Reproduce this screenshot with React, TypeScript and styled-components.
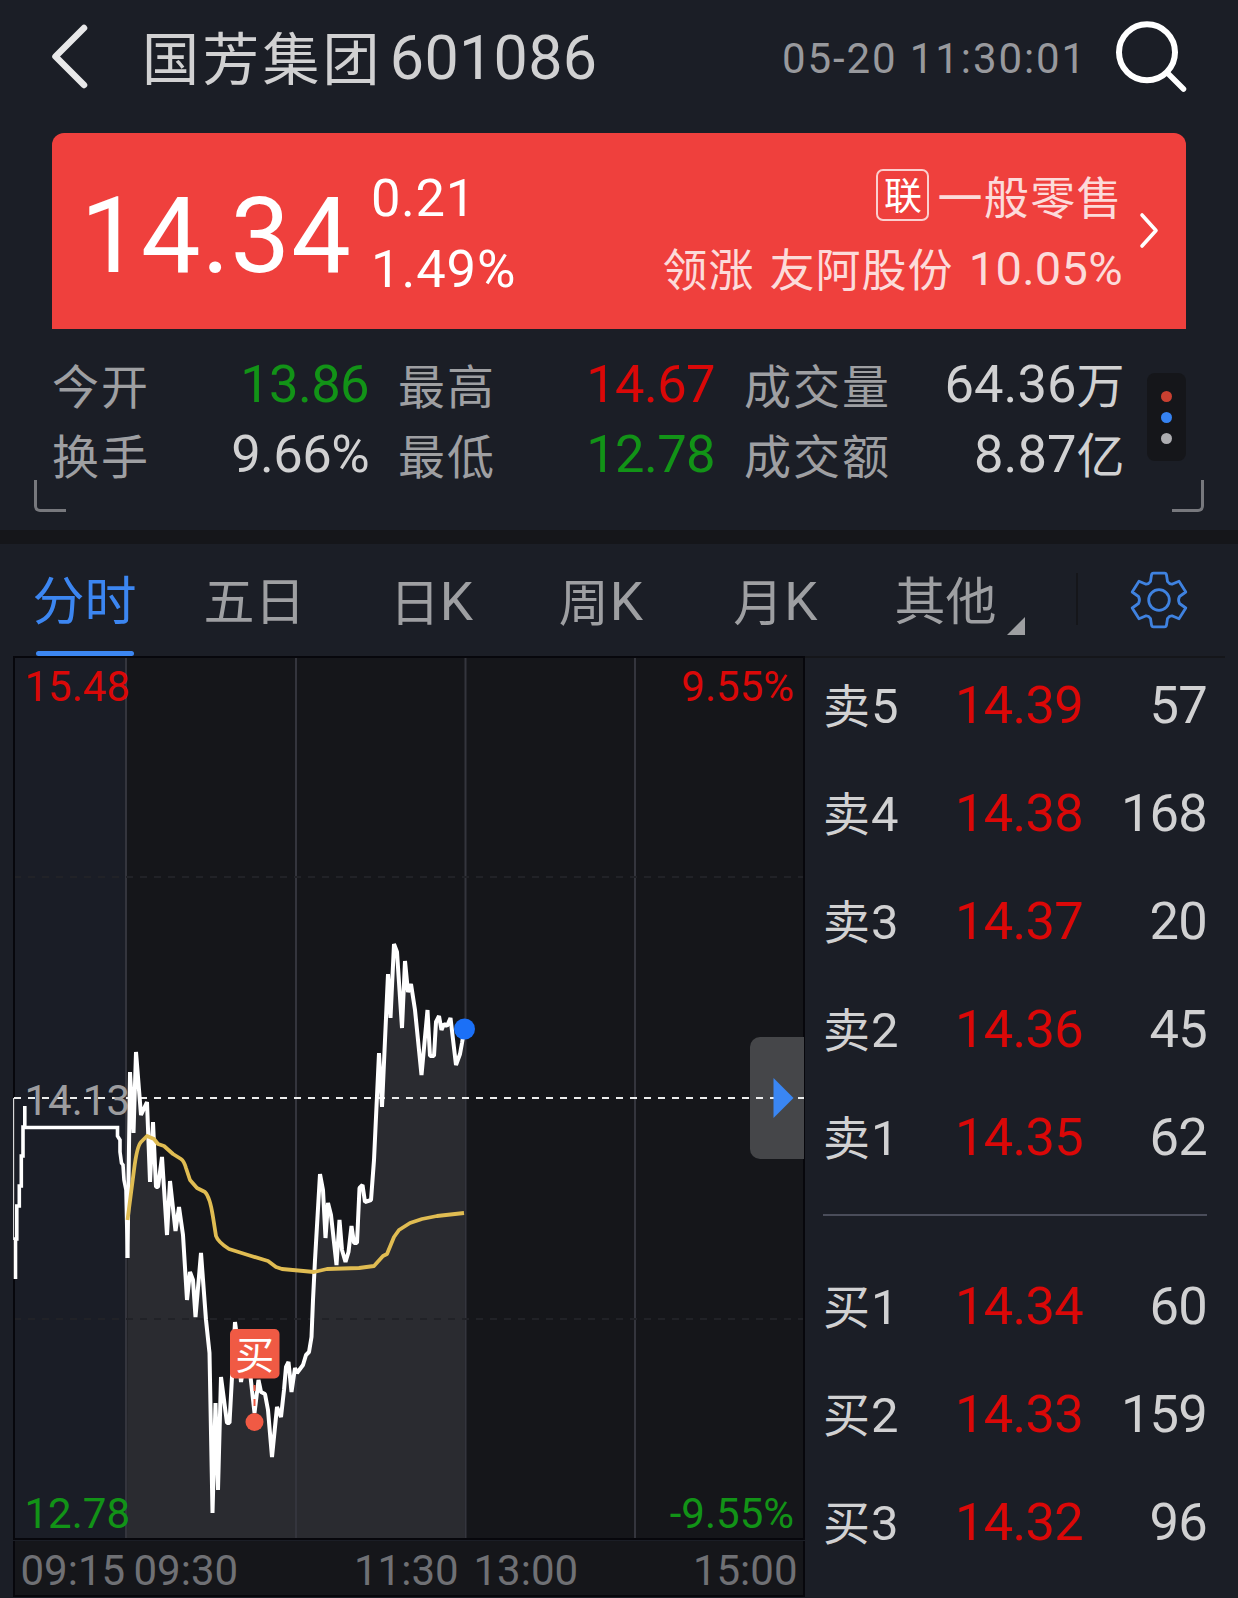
import React from "react";
import styled, { createGlobalStyle } from "styled-components";

const colors = {
  page: "#1b1e26",
  deep: "#15161a",
  border: "#07070c",
  grid: "#34353d",
  red: "#da0808",
  green: "#129317",
  light: "#d1d1d2",
  muted: "#9e9fa2",
  blue: "#3c86f1",
  card: "#ef403d",
};

const GlobalStyle = createGlobalStyle`
  * { box-sizing: border-box; }
  html, body { margin: 0; padding: 0; background: ${colors.page}; }
  body { font-family: Roboto, "Noto Sans CJK SC", sans-serif; font-weight: 400; }
  svg { display: block; flex: none; }
`;

const Screen = styled.main`
  width: 1238px;
  height: 1598px;
  overflow: hidden;
  background: ${colors.page};
  display: flex;
  flex-direction: column;
`;

const Text = styled.span<{ $size: number; $color?: string; $spacing?: number; $drop?: number }>`
  display: inline-block;
  font-size: ${(p) => p.$size}px;
  color: ${(p) => p.$color ?? "inherit"};
  letter-spacing: ${(p) => p.$spacing ?? 0}px;
  word-spacing: 3px;
  transform: translateY(${(p) => p.$drop ?? 0}px);
  white-space: pre;
`;

/* Header */
const Header = styled.header`
  height: 117px;
  margin-bottom: 16px;
  padding: 0 48px 0 48px;
  display: flex;
  align-items: center;
  flex: none;
`;

const Title = styled.h1`
  margin: 0 0 0 50px;
  font-size: 61px;
  font-weight: 400;
  line-height: 117px;
  color: ${colors.light};
  display: flex;
  align-items: baseline;
  gap: 7px;
`;

const Clock = styled.time`
  margin-left: auto;
  margin-right: 25px;
  font-size: 42px;
  line-height: 117px;
  letter-spacing: 1.9px;
  color: #98999d;
`;

/* Quote card */
const Card = styled.section`
  height: 196px;
  flex: none;
  margin: 0 52px;
  padding-left: 28.5px;
  border-radius: 12px 12px 0 0;
  background: ${colors.card};
  color: #fff;
  display: flex;
`;

const Price = styled.div`
  width: 290.5px;
  font-size: 106px;
  line-height: 206px;
  letter-spacing: 1px;
`;

const Lines = styled.div<{ $end?: boolean }>`
  padding-top: 30px;
  display: flex;
  flex-direction: column;
  align-items: ${(p) => (p.$end ? "flex-end" : "flex-start")};
  ${(p) => p.$end && "margin-left: auto; color: rgba(255,255,255,0.82);"}
`;

const Line = styled.div`
  height: 70.5px;
  line-height: 70.5px;
  display: flex;
  align-items: baseline;
`;

const Tag = styled.span`
  width: 53px;
  height: 52px;
  align-self: flex-start;
  border: 2px solid rgba(255, 255, 255, 0.75);
  border-radius: 7px;
  margin: 6px 8px 0 0;
  color: #fff;
  font-size: 38px;
  line-height: 50px;
  text-align: center;
`;

const CardArrow = styled.div`
  width: 63px;
  padding: 78px 0 0 14.5px;
`;

/* Stats */
const Stats = styled.section`
  height: 201px;
  flex: none;
  padding: 20px 52px 0 52px;
  display: flex;
  position: relative;
`;

const StatColumn = styled.div<{ $width: number; $gap: number }>`
  width: ${(p) => p.$width}px;
  margin-right: ${(p) => p.$gap}px;
`;

const Stat = styled.div`
  height: 70px;
  line-height: 70px;
  font-size: 52.5px;
  display: flex;
  justify-content: space-between;
  align-items: baseline;
`;

const MoreButton = styled.button`
  width: 39px;
  height: 88px;
  margin: 24px 0 0 0;
  padding: 0;
  border: 0;
  border-radius: 8px;
  background: ${colors.deep};
  display: flex;
  flex-direction: column;
  align-items: center;
  justify-content: center;
  gap: 10px;
`;

const Dot = styled.i<{ $color: string }>`
  width: 11px;
  height: 11px;
  border-radius: 50%;
  background: ${(p) => p.$color};
`;

const Corner = styled.i<{ $side: "left" | "right" }>`
  position: absolute;
  bottom: 18px;
  ${(p) => p.$side}: 34px;
  width: 32px;
  height: 32px;
  border: 0 solid #77787d;
  border-bottom-width: 3px;
  border-${(p) => p.$side}-width: 3px;
  border-bottom-${(p) => p.$side}-radius: 6px;
`;

const Band = styled.div`
  height: 14px;
  flex: none;
  background: ${colors.deep};
`;

/* Tabs */
const Tabs = styled.nav`
  height: 112px;
  flex: none;
  display: grid;
  grid-template-rows: 112px;
  grid-template-columns: 169px 171px 183px 156px 193px 147px 59px 1fr;
`;

const Tab = styled.div<{ $active?: boolean }>`
  display: flex;
  justify-content: center;
  align-items: baseline;
  line-height: 116px;
  font-size: 53px;
  color: ${(p) => (p.$active ? colors.blue : colors.muted)};
  position: relative;
  &::after {
    content: "";
    display: ${(p) => (p.$active ? "block" : "none")};
    position: absolute;
    left: 36px;
    bottom: 0;
    width: 98px;
    height: 5px;
    border-radius: 3px;
    background: ${colors.blue};
  }
`;

const MoreMark = styled.i`
  position: absolute;
  right: -6px;
  bottom: 21px;
  border-style: solid;
  border-width: 0 0 18px 18px;
  border-color: transparent transparent ${colors.muted} transparent;
`;

const TabRule = styled.div`
  border-right: 2px solid ${colors.deep};
  height: 52px;
  margin-top: 29px;
`;

const Settings = styled.div`
  padding: 26px 0 0 51px;
`;

/* Chart and order book */
const Body = styled.section`
  flex: 1;
  display: flex;
  padding-left: 13px;
`;

const ChartPane = styled.div`
  width: 792px;
  flex: none;
  display: flex;
  flex-direction: column;
`;

const TimeAxis = styled.div`
  height: 56px;
  margin-top: 1px;
  border: 2px solid ${colors.border};
  border-top: 0;
  background: ${colors.deep};
  color: #6f7074;
  font-size: 42px;
  line-height: 60px;
  padding: 0 5.5px 0 5.5px;
  display: grid;
  grid-template-columns: 113px 220.5px 119.5px 1fr auto;
`;

const Book = styled.div`
  flex: 1;
  min-width: 0;
  padding: 0 31px 0 18px;
`;

const BookRule = styled.div`
  height: 2px;
  margin: 0 -18px 20.5px;
  background: ${colors.deep};
`;

const Orders = styled.div`
  display: flex;
  flex-direction: column;
  gap: 55.1px;
`;

const Order = styled.div`
  height: 53px;
  line-height: 53px;
  font-size: 52.5px;
  letter-spacing: -0.8px;
  color: ${colors.light};
  display: grid;
  grid-template-columns: 132px 1fr auto;
  align-items: baseline;
`;

const OrderLabel = styled.span`
  font-size: 49px;
  letter-spacing: 0;
  display: flex;
  align-items: baseline;
`;

const Separator = styled.hr`
  height: 2px;
  border: 0;
  margin: 50.5px 0 63.5px;
  background: #4a4d5a;
`;

type StatItem = { label: string; value: string; unit?: string; color?: string };

const stats: { width: number; gap: number; items: StatItem[] }[] = [
  {
    width: 317,
    gap: 29,
    items: [
      { label: "今开", value: "13.86", color: colors.green },
      { label: "换手", value: "9.66%" },
    ],
  },
  {
    width: 317,
    gap: 29,
    items: [
      { label: "最高", value: "14.67", color: colors.red },
      { label: "最低", value: "12.78", color: colors.green },
    ],
  },
  {
    width: 380.5,
    gap: 22.5,
    items: [
      { label: "成交量", value: "64.36", unit: "万" },
      { label: "成交额", value: "8.87", unit: "亿" },
    ],
  },
];

const sells = [
  ["5", "14.39", "57"],
  ["4", "14.38", "168"],
  ["3", "14.37", "20"],
  ["2", "14.36", "45"],
  ["1", "14.35", "62"],
];
const buys = [
  ["1", "14.34", "60"],
  ["2", "14.33", "159"],
  ["3", "14.32", "96"],
];

const auctionStart =
  "15.5,1279 15.5,1239 16.8,1239 16.8,1206 19.3,1206 19.3,1186 21.3,1186 21.3,1156 23,1156 23,1127 24.8,1127 24.8,1106";
const auctionEnd =
  "24,1127.5 117.5,1127.5 117.5,1136 120,1140 120,1152 121.5,1163 123,1165 124,1180 126,1190 127.5,1258";

const priceLine =
  "127.5,1258 130,1072 133.5,1133 136,1052 141,1115 147,1102 150,1182 153,1122 156,1187 158,1187 162,1157 167,1235 170,1181 175.5,1231 179,1207 183,1235 187,1300 190,1272 193,1280 195.5,1317 201,1253 206,1320 209.5,1353 212.5,1513 215.5,1403 218,1490 221,1377 227,1423 229.5,1423 235,1322 238,1345 241,1382 246,1352 250,1372 254.5,1413 258.5,1380 261,1392 265,1394 268,1410 272,1457 277,1407 281,1417 284,1390 286,1367 288.5,1362 291.5,1392 295,1368 297,1373 303,1365 306,1355 309,1352 311.5,1337 313,1300 315,1260 320,1174 323,1190 325.5,1238 328,1203 331,1215 336.5,1265 339.5,1220 342,1250 345.5,1262 348.5,1252 351.5,1226 354,1243 357,1243 359.5,1188 362.5,1185 365,1202 371,1200 374,1160 379,1053 382,1107 385,1040 388,974 390.5,1018 394,944 397,952 402,1028 405,961 408,992 411,984 415,1010 421.5,1075 427.5,1010 430,1056 434,1056 436,1022 439,1016 441.5,1030 444,1024 447,1026 450.5,1018 456,1065 460,1054 462,1043 464.5,1029";

const averageLine =
  "M127.5 1220L134 1170Q137 1146 141 1142L147 1136L154 1139L158 1144L164 1146L173 1154L181 1159Q184 1161 186 1168L190 1180L197 1188L205 1192Q210 1197 213 1217L216 1236Q218 1242 229 1249L248 1255L268 1261L276 1267L282 1269L314 1272L327 1269L359 1268L374 1266L383 1256L387 1254L394 1237L399 1230L410 1223L422 1219L437 1216L464 1213";

const Chart = () => (
  <svg width="792" height="884" viewBox="13 656 792 884" fontFamily="Roboto, 'Noto Sans CJK SC', sans-serif">
    <rect x="13" y="656" width="792" height="884" fill={colors.deep} />
    <rect x="14" y="657" width="112" height="882" fill="#1a1d26" />
    <polygon points={`127,1538 ${priceLine} 464.5,1538`} fill="#2a2b30" />
    <path d="M126 658V1538M296 658V1538M465.5 658V1538M635 658V1538" stroke={colors.grid} strokeWidth="2" />
    <path d="M14 877H803M14 1319H803" stroke="#212227" strokeWidth="2" strokeDasharray="7 7" />
    <rect x="14" y="657" width="790" height="882" fill="none" stroke={colors.border} strokeWidth="2" />
    <g fontSize="42">
      <text x="24.5" y="701" fill={colors.red}>15.48</text>
      <text x="794" y="701" fill={colors.red} textAnchor="end">9.55%</text>
      <text x="24.5" y="1528" fill={colors.green}>12.78</text>
      <text x="794" y="1528" fill={colors.green} textAnchor="end">-9.55%</text>
    </g>
    <path d="M804 1037H760A10 10 0 0 0 750 1047V1149A10 10 0 0 0 760 1159H804Z" fill="#454649" />
    <path d="M14 1098H804" stroke="#eceded" strokeWidth="2" strokeDasharray="7 7" />
    <text x="24.5" y="1114.5" fontSize="42" fill="#9c9c9f">14.13</text>
    <path d="M13.5 1098V1240" stroke="#d8d8da" strokeWidth="1.5" />
    <polyline points={auctionStart} fill="none" stroke="#fff" strokeWidth="3.6" />
    <polyline points={auctionEnd} fill="none" stroke="#fff" strokeWidth="3.6" />
    <polyline points={priceLine} fill="none" stroke="#fff" strokeWidth="4" strokeLinejoin="bevel" />
    <path d={averageLine} fill="none" stroke="#e0bc52" strokeWidth="3.8" strokeLinejoin="round" />
    <path d="M773.5 1078L793.5 1098L773.5 1118Z" fill="#3a86f3" />
    <circle cx="464.5" cy="1029" r="10.5" fill="#1b70f7" />
    <path d="M254.5 1385V1391M254.5 1399V1406" stroke="#f05a44" strokeWidth="2" />
    <rect x="230" y="1329" width="49.5" height="49.5" rx="5" fill="#f05a44" />
    <text x="254.7" y="1369" fontSize="39" fill="#fff" textAnchor="middle">买</text>
    <circle cx="254.5" cy="1422" r="9" fill="#f05a44" />
  </svg>
);

const Gear = () => (
  <svg width="60" height="60" viewBox="-30 -30 60 60" fill="none" stroke="#3f82e0" strokeWidth="2.8" strokeLinejoin="round">
    <path d="M-7.5 -25Q-7.200 -26.800 -5.500 -26.800H5.500Q7.200 -26.800 7.500 -25L8.500 -18.500Q10.500 -15.500 13.500 -16L20 -18.800L26.800 -8L20.500 -3.500Q18.600 0 20.500 3.500L26.800 8L20 18.800L13.500 16Q10.500 15.500 8.500 18.500L7.500 25Q7.200 26.800 5.500 26.800H-5.500Q-7.200 26.800 -7.500 25L-8.500 18.500Q-10.500 15.500 -13.500 16L-20 18.800L-26.800 8L-20.500 3.500Q-18.600 0 -20.500 -3.500L-26.800 -8L-20 -18.800L-13.500 -16Q-10.500 -15.500 -8.500 -18.500Z" />
    <circle r="10.3" />
  </svg>
);

const OrderRow = ({ side, row }: { side: string; row: string[] }) => (
  <Order>
    <OrderLabel>
      <Text $size={47} $spacing={1}>{side}</Text>
      {row[0]}
    </OrderLabel>
    <Text $size={52.5} $color={colors.red} $spacing={-0.8}>{row[1]}</Text>
    <span>{row[2]}</span>
  </Order>
);

export default function App() {
  return (
    <Screen>
      <GlobalStyle />
      <Header>
        <svg width="44" height="72" viewBox="48 22.5 44 72" fill="none" stroke="#e8e8e9" strokeWidth="6.500" strokeLinecap="round" strokeLinejoin="round">
          <path d="M84 27.500L55.500 56L84 84.500" />
        </svg>
        <Title>
          <Text $size={57} $spacing={3.2} $drop={1}>国芳集团</Text>
          <Text $size={61} $spacing={0.3}>601086</Text>
        </Title>
        <Clock>05-20 11:30:01</Clock>
        <svg width="78" height="78" viewBox="1112 19.5 78 78" fill="none" stroke="#fff" strokeLinecap="round">
          <circle cx="1147" cy="51.800" r="28" strokeWidth="6" />
          <path d="M1168 73L1183.500 88.500" strokeWidth="5.500" />
        </svg>
      </Header>

      <Card>
        <Price>14.34</Price>
        <Lines>
          <Line><Text $size={52.5} $spacing={0.6}>0.21</Text></Line>
          <Line><Text $size={52.5} $spacing={0.9}>1.49%</Text></Line>
        </Lines>
        <Lines $end>
          <Line>
            <Tag>联</Tag>
            <Text $size={45} $spacing={1.4} $drop={1.5}>一般零售</Text>
          </Line>
          <Line>
            <Text $size={45} $spacing={1} $drop={1.5}>领涨 友阿股份 </Text>
            <Text $size={47} $spacing={0.3}>10.05%</Text>
          </Line>
        </Lines>
        <CardArrow>
          <svg width="24" height="40" fill="none" stroke="#fff" strokeWidth="3.6" strokeLinecap="round" strokeLinejoin="round">
            <path d="M4 4L18 19.500L4 35" />
          </svg>
        </CardArrow>
      </Card>

      <Stats>
        {stats.map((column) => (
          <StatColumn key={column.items[0].label} $width={column.width} $gap={column.gap}>
            {column.items.map((item) => (
              <Stat key={item.label}>
                <Text $size={47} $spacing={2} $drop={1.5} $color={colors.muted}>{item.label}</Text>
                <span>
                  <Text $size={52.5} $spacing={item.unit ? 0 : -0.6} $color={item.color ?? colors.light}>{item.value}</Text>
                  {item.unit && <Text $size={48} $drop={0.5} $color={colors.light}>{item.unit}</Text>}
                </span>
              </Stat>
            ))}
          </StatColumn>
        ))}
        <MoreButton aria-label="more">
          <Dot $color="#c94031" />
          <Dot $color="#3683f2" />
          <Dot $color="#adadb1" />
        </MoreButton>
        <Corner $side="left" />
        <Corner $side="right" />
      </Stats>

      <Band />

      <Tabs>
        <Tab $active><Text $size={52} $drop={0.5}>分时</Text></Tab>
        <Tab><Text $size={51} $drop={1}>五日</Text></Tab>
        <Tab><Text $size={50} $drop={1}>日</Text>K</Tab>
        <Tab><Text $size={50} $spacing={1} $drop={1}>周</Text>K</Tab>
        <Tab><Text $size={50} $spacing={1} $drop={1}>月</Text>K</Tab>
        <Tab><Text $size={51} $drop={1}>其他</Text><MoreMark /></Tab>
        <TabRule />
        <Settings><Gear /></Settings>
      </Tabs>

      <Body>
        <ChartPane>
          <Chart />
          <TimeAxis>
            <span>09:15</span>
            <span>09:30</span>
            <span>11:30</span>
            <span>13:00</span>
            <span>15:00</span>
          </TimeAxis>
        </ChartPane>
        <Book>
          <BookRule />
          <Orders>
            {sells.map((row) => <OrderRow key={row[0]} side="卖" row={row} />)}
          </Orders>
          <Separator />
          <Orders>
            {buys.map((row) => <OrderRow key={row[0]} side="买" row={row} />)}
          </Orders>
        </Book>
      </Body>
    </Screen>
  );
}
